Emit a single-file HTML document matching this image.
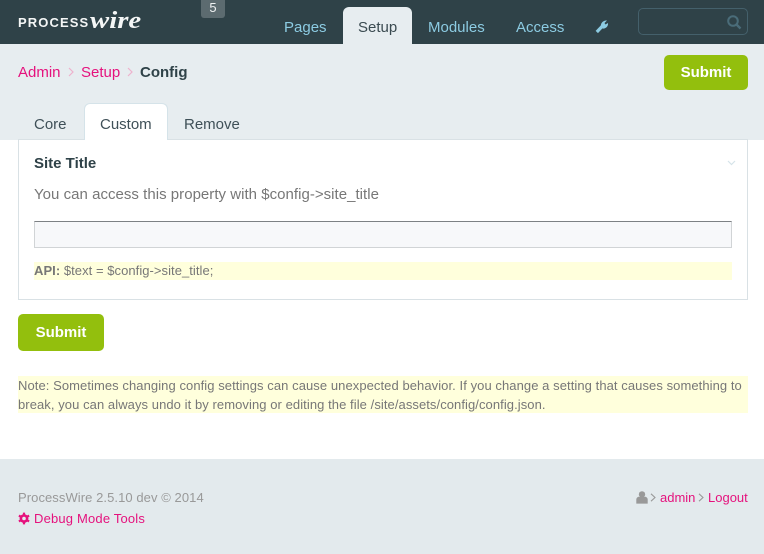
<!DOCTYPE html>
<html><head><meta charset="utf-8"><style>
*{box-sizing:border-box;margin:0;padding:0}
html,body{width:764px;height:554px;overflow:hidden;background:#fff;font-family:"Liberation Sans",sans-serif}
.a{position:absolute;white-space:nowrap}
a{color:#e5127d;text-decoration:none}
.btn{position:absolute;background:#93bf0d;color:#fff;font-weight:bold;font-size:15px;border-radius:5px;text-align:center}
</style></head><body>
<div class="a" style="left:0;top:0;width:764px;height:44px;background:#2f4248"></div>
<div class="a" style="left:18px;top:15px;color:#f4f6f6;font-weight:bold;font-size:13px;letter-spacing:1.1px;line-height:15px">PROCESS</div>
<div class="a" style="left:90px;top:7px;color:#f4f6f6;font-family:'Liberation Serif',serif;font-style:italic;font-weight:bold;font-size:24px;line-height:28px;transform:scaleX(1.2);transform-origin:0 0">wire</div>
<div class="a" style="left:201px;top:0;width:24px;height:18px;background:#5c6b70;border-radius:0 0 3px 3px;color:#eef1f2;font-size:13px;line-height:16px;text-align:center">5</div>

<div class="a" style="left:284px;top:19px;color:#8ccbe2;font-size:15px;line-height:17px">Pages</div>
<div class="a" style="left:343px;top:7px;width:69px;height:37px;background:#e7edf0;border-radius:6px 6px 0 0"></div>
<div class="a" style="left:358px;top:19px;color:#3a4a50;font-size:15px;line-height:17px">Setup</div>
<div class="a" style="left:428px;top:19px;color:#8ccbe2;font-size:15px;line-height:17px">Modules</div>
<div class="a" style="left:516px;top:19px;color:#8ccbe2;font-size:15px;line-height:17px">Access</div>
<svg class="a" style="left:595px;top:19px" width="14" height="15" viewBox="0 0 14 15"><path d="M1.8 13 L7 7.5" stroke="#8ccbe2" stroke-width="3.2" fill="none"/><path d="M6 8.5 C5 4.5 8 1 12 1.5 L9.5 4 L10.5 5.5 L13 4 C13.5 7.5 10.5 10 7.5 9.5Z" fill="#8ccbe2"/></svg>
<div class="a" style="left:638px;top:8px;width:110px;height:27px;border:1px solid #44606b;border-radius:5px"></div>
<svg class="a" style="left:726px;top:14px" width="16" height="16" viewBox="0 0 16 16"><circle cx="7" cy="7" r="4.8" stroke="#4a6c79" stroke-width="2" fill="none"/><path d="M10.5 10.5 L14.5 14.5" stroke="#4a6c79" stroke-width="2.4"/></svg>

<div class="a" style="left:0;top:44px;width:764px;height:96px;background:#e7edf0"></div>
<a class="a" style="left:18px;top:64px;font-size:15px;line-height:17px">Admin</a>
<svg class="a" style="left:67px;top:67px" width="8" height="10" viewBox="0 0 8 10"><path d="M2 1 L6 5 L2 9" stroke="#eeb1cd" stroke-width="1.2" fill="none"/></svg>
<a class="a" style="left:81px;top:64px;font-size:15px;line-height:17px">Setup</a>
<svg class="a" style="left:126px;top:67px" width="8" height="10" viewBox="0 0 8 10"><path d="M2 1 L6 5 L2 9" stroke="#eeb1cd" stroke-width="1.2" fill="none"/></svg>
<div class="a" style="left:140px;top:64px;font-size:15px;line-height:17px;font-weight:bold;color:#2f4248">Config</div>
<div class="btn" style="left:664px;top:55px;width:84px;height:35px;line-height:36px">Submit</div>

<div class="a" style="left:34px;top:116px;font-size:15px;line-height:17px;color:#3f5058">Core</div>
<div class="a" style="left:84px;top:103px;width:84px;height:37px;background:#fff;border:1px solid #d5e3e9;border-bottom:0;border-radius:6px 6px 0 0;z-index:2"></div>
<div class="a" style="left:100px;top:116px;font-size:15px;line-height:17px;color:#3f5058;z-index:3">Custom</div>
<div class="a" style="left:184px;top:116px;font-size:15px;line-height:17px;color:#3f5058">Remove</div>

<div class="a" style="left:18px;top:139px;width:730px;height:161px;background:#fff;border:1px solid #d9e1e5"></div>
<div class="a" style="left:34px;top:155px;font-size:15px;line-height:17px;font-weight:bold;color:#2f4248">Site Title</div>
<svg class="a" style="left:727px;top:160px" width="9" height="6" viewBox="0 0 9 6"><path d="M1 1 L4.5 4.5 L8 1" stroke="#d5e3e9" stroke-width="1.2" fill="none"/></svg>
<div class="a" style="left:34px;top:186px;font-size:15px;line-height:17px;color:#777;letter-spacing:.03px">You can access this property with $config-&gt;site_title</div>
<div class="a" style="left:34px;top:221px;width:698px;height:27px;background:#f7f8fa;border:1px solid #d1d4d6;border-top-color:#7d8184"></div>
<div class="a" style="left:34px;top:262px;width:698px;height:18px;background:#ffffdc;font-size:13px;line-height:17px;color:#777;letter-spacing:.05px"><b>API:</b> $text = $config-&gt;site_title;</div>
<div class="btn" style="left:18px;top:314px;width:86px;height:37px;line-height:38px">Submit</div>

<div class="a" style="left:18px;top:376px;width:730px;height:37px;background:#ffffdc;font-size:13px;line-height:19px;color:#777;white-space:normal;letter-spacing:.07px">Note: Sometimes changing config settings can cause unexpected behavior. If you change a setting that causes something to break, you can always undo it by removing or editing the file /site/assets/config/config.json.</div>

<div class="a" style="left:0;top:459px;width:764px;height:95px;background:#e3eaed"></div>
<div class="a" style="left:18px;top:490px;font-size:13px;line-height:15px;color:#999;letter-spacing:.07px">ProcessWire 2.5.10 dev © 2014</div>
<svg class="a" style="left:18px;top:512px" width="12" height="13" viewBox="0 0 12 13"><circle cx="6" cy="6.5" r="4.4" fill="#e5127d"/><path d="M6 .6V12.4M.9 3.55L11.1 9.45M.9 9.45L11.1 3.55" stroke="#e5127d" stroke-width="2.2"/><circle cx="6" cy="6.5" r="1.8" fill="#e3eaed"/></svg>
<a class="a" style="left:34px;top:511px;font-size:13px;line-height:15px;letter-spacing:.18px">Debug Mode Tools</a>
<svg class="a" style="left:636px;top:491px" width="12" height="13" viewBox="0 0 12 13"><circle cx="6" cy="3.4" r="3.2" fill="#999"/><path d="M.3 12.6V8.8C.3 7 1.5 5.8 3 5.8H9C10.5 5.8 11.7 7 11.7 8.8V12.6Z" fill="#999"/></svg>
<svg class="a" style="left:650px;top:493px" width="7" height="9" viewBox="0 0 7 9"><path d="M1 .8L5 4.5L1 8.2" stroke="#999" stroke-width="1.1" fill="none"/></svg>
<a class="a" style="left:660px;top:490px;font-size:13px;line-height:15px">admin</a>
<svg class="a" style="left:698px;top:493px" width="7" height="9" viewBox="0 0 7 9"><path d="M1 .8L5 4.5L1 8.2" stroke="#999" stroke-width="1.1" fill="none"/></svg>
<a class="a" style="left:708px;top:490px;font-size:13px;line-height:15px">Logout</a>
</body></html>
